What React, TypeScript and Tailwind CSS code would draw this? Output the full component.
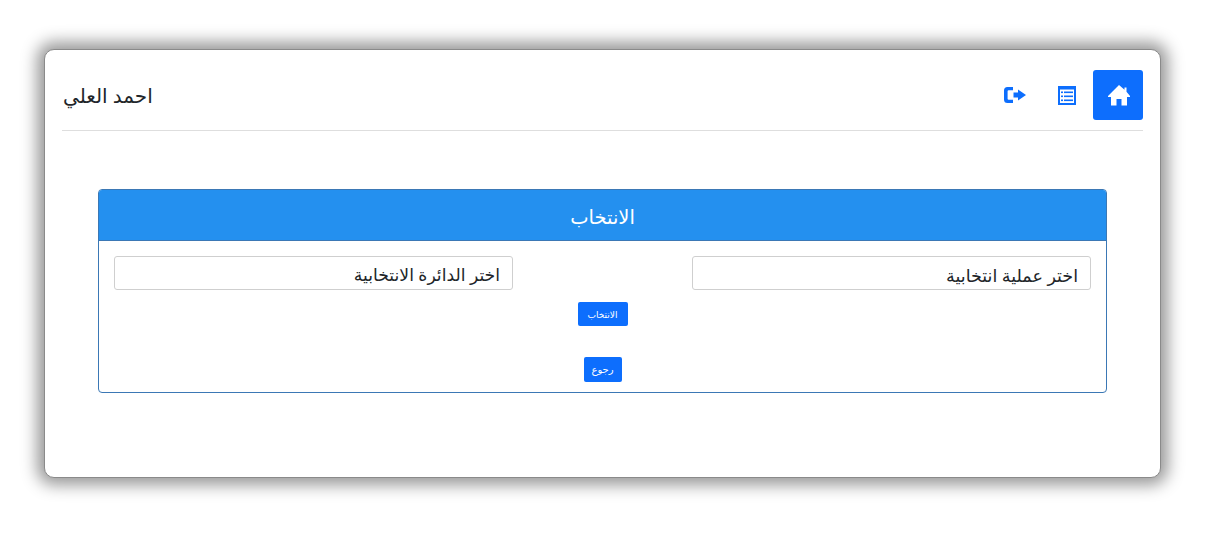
function HomeIcon() {
  return (
    <svg width="24" height="21" viewBox="0 0 24 21" fill="currentColor">
      <path d="M13 0 L18.5 4.8 V2.5 H20.5 V6.8 L24 11 V12 H21 V20.5 H15.5 V14 H10.5 V20.5 H5 V12 H2 V11 Z" />
    </svg>
  );
}

function ListIcon() {
  const rows = [5.5, 9.5, 13.5];
  return (
    <svg width="18" height="19" viewBox="0 0 18 19">
      <rect x="0" y="0" width="18" height="19" fill="#0d6efd" />
      <rect x="2" y="3.5" width="14" height="13.5" fill="#ffffff" />
      {rows.map((y) => (
        <g key={y} fill="#0d6efd">
          <rect x="3" y={y} width="2" height="1.6" />
          <rect x="6" y={y} width="9" height="1.6" />
        </g>
      ))}
    </svg>
  );
}

function LogoutIcon() {
  return (
    <svg width="22" height="16" viewBox="0 0 22 16" fill="#0d6efd">
      <path d="M3.5 0 H9 V3.2 H4.6 Q3.6 3.2 3.6 4.2 V11.8 Q3.6 12.8 4.6 12.8 H9 V16 H3.5 Q0 16 0 12.5 V3.5 Q0 0 3.5 0 Z" />
      <path d="M14 2.5 L22 8 L14 13.5 V10.5 H9.5 V5.5 H14 Z" />
    </svg>
  );
}

export default function App() {
  return (
    <div className="w-[1206px] h-[544px] bg-white pt-[49px] pl-[44px] overflow-hidden font-['Open_Sans','DejaVu_Sans',sans-serif]">
      <div dir="rtl" className="w-[1117px] h-[429px] bg-white border border-[#8a8a8a] rounded-[10px] shadow-[0_0_16px_7px_#999999] px-[17px] pt-[20px]">
        <div className="flex items-center justify-between h-[50px]">
          <div className="flex items-center">
            <a className="w-[50px] h-[50px] bg-[#0d6efd] rounded-[3px] flex items-center justify-center text-white"><HomeIcon /></a>
            <a className="w-[52px] h-[50px] flex items-center justify-center"><ListIcon /></a>
            <a className="w-[52px] h-[50px] flex items-center justify-center"><LogoutIcon /></a>
          </div>
          <div className="text-[20px] leading-[30px] text-[#212529] ml-[1px] mt-[1px]">احمد العلي</div>
        </div>
        <div className="mt-[10px] border-t border-[#dedede]" />
        <div className="mx-[36px] mt-[58px] h-[204px] border border-[#3b78b5] rounded-[4px] overflow-hidden">
          <div className="h-[51px] pt-[3px] bg-[#2490ef] border-b border-[#3b78b5] flex items-center justify-center text-white text-[19.5px]">الانتخاب</div>
          <div className="flex justify-between px-[15px] pt-[15px]">
            <div className="w-[399px] h-[34px] border border-[#cfcfcf] rounded-[3px] px-[12px] text-[17.5px] leading-[36px] text-[#212529]">اختر عملية انتخابية</div>
            <div className="w-[399px] h-[34px] border border-[#cfcfcf] rounded-[3px] px-[12px] text-[17.2px] leading-[36px] text-[#212529]">اختر الدائرة الانتخابية</div>
          </div>
          <div className="flex justify-center mt-[12px]">
            <button className="w-[50px] h-[24px] pt-[1px] bg-[#0d6efd] rounded-[2px] text-white text-[9px]">الانتخاب</button>
          </div>
          <div className="flex justify-center mt-[31px]">
            <button className="w-[38px] h-[25px] bg-[#0d6efd] rounded-[2px] text-white text-[10px]">رجوع</button>
          </div>
        </div>
      </div>
    </div>
  );
}
